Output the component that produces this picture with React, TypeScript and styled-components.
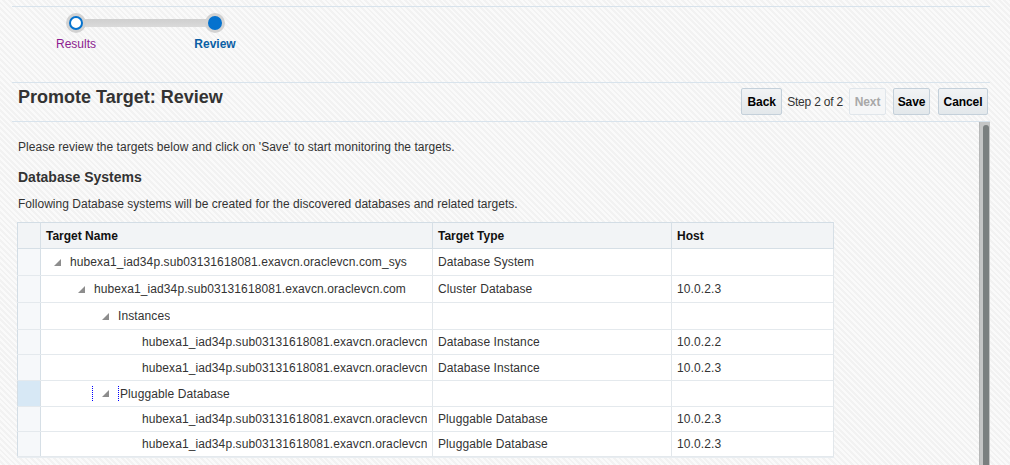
import React from "react";
import styled, { createGlobalStyle } from "styled-components";

const GlobalStyle = createGlobalStyle`
  html, body { margin: 0; padding: 0; }
  body {
    width: 1010px;
    height: 465px;
    overflow: hidden;
    background-color: #f6f6f6;
    background-image: repeating-linear-gradient(45deg, #fafafa 0 2px, #f2f2f2 2px 4px);
    font-family: "Liberation Sans", Arial, Helvetica, sans-serif;
    font-size: 12px;
    color: #333;
  }
`;

const Page = styled.div`
  padding: 6px 20px 0 12px;
`;

const Train = styled.div`
  border-top: 1px solid #d8e3ec;
  height: 75px;
  box-sizing: content-box;
`;

const TrainRow = styled.div`
  display: flex;
  align-items: flex-start;
  padding-top: 6px;
  margin-left: 34px;
`;

const Stop = styled.div`
  display: flex;
  flex-direction: column;
  align-items: center;
  width: 60px;
`;

const Ring = styled.div`
  position: relative;
  z-index: 1;
  width: 20px;
  height: 20px;
  border-radius: 50%;
  background: #d2d2d2;
  display: flex;
  align-items: center;
  justify-content: center;
`;

const Dot = styled.div<{ $current?: boolean }>`
  width: 14px;
  height: 14px;
  box-sizing: border-box;
  border-radius: 50%;
  border: 2px solid #0572ce;
  background: ${(p) => (p.$current ? "#0572ce" : "#ffffff")};
`;

const StopLabel = styled.div<{ $current?: boolean }>`
  margin-top: 4px;
  line-height: 14px;
  font-size: 12px;
  white-space: nowrap;
  color: ${(p) => (p.$current ? "#0b5fa5" : "#8c1c8f")};
  font-weight: ${(p) => (p.$current ? "bold" : "normal")};
`;

const Connector = styled.div`
  width: 123px;
  flex: none;
  height: 8px;
  margin: 6px -22px 0;
  background: linear-gradient(#cfcfcf, #dadada);
`;

const Header = styled.div`
  display: flex;
  justify-content: space-between;
  align-items: flex-start;
  height: 38px;
  border-top: 1px solid #d8e3ec;
  border-bottom: 1px solid #d8e3ec;
  padding: 0 2px 0 6px;
`;

const Title = styled.h1`
  margin: 3px 0 0;
  font-size: 18px;
  line-height: 22px;
  font-weight: bold;
  color: #333;
`;

const Toolbar = styled.div`
  display: flex;
  align-items: center;
  margin-top: 5px;
`;

const Button = styled.button<{ $gap?: number; $w: number }>`
  width: ${(p) => p.$w}px;
  height: 27px;
  box-sizing: border-box;
  margin-left: ${(p) => p.$gap ?? 0}px;
  padding: 0;
  text-align: center;
  border: 1px solid #c4d0da;
  border-radius: 2px;
  background: linear-gradient(#f1f3f5, #e3e8eb);
  font-family: "Liberation Sans", Arial, sans-serif;
  font-size: 12px;
  font-weight: bold;
  letter-spacing: -0.1px;
  color: #000;
  &:disabled {
    background: #f5f6f7;
    border-color: #e0e6eb;
    color: #a8a8a8;
  }
`;

const StepText = styled.span`
  margin: 0 0 0 5px;
  font-size: 12px;
  letter-spacing: -0.2px;
  color: #333;
  white-space: nowrap;
`;

const Body = styled.div`
  display: flex;
  height: 343px;
  overflow: hidden;
`;

const Main = styled.div`
  flex: 1;
  padding-left: 5px;
`;

const Intro = styled.p`
  margin: 18px 0 0 1px;
  line-height: 14px;
  letter-spacing: 0.03px;
`;

const SectionTitle = styled.h2`
  margin: 15px 0 0 1px;
  font-size: 14px;
  line-height: 17px;
  font-weight: bold;
  color: #333;
`;

const Note = styled.p`
  margin: 11px 0 0 1px;
  line-height: 14px;
  letter-spacing: 0.03px;
`;

const Table = styled.table`
  margin-top: 11px;
  border-collapse: collapse;
  table-layout: fixed;
  width: 817px;
  background: #fff;
  border: 1px solid #d3dde5;
  box-shadow: 0 1px 0 #e8edf1;
`;

const HeadCell = styled.th`
  height: 25px;
  padding: 0 5px;
  text-align: left;
  font-size: 12px;
  font-weight: bold;
  color: #111;
  background: #f2f4f6;
  border-right: 1px solid #d6dfe6;
  border-bottom: 1px solid #d6dfe6;
`;

const Row = styled.tr<{ $h: number }>`
  height: ${(p) => p.$h}px;
`;

const SelectCell = styled.td<{ $active?: boolean }>`
  padding: 0;
  background: ${(p) => (p.$active ? "#d7e8f5" : "#f6f8fa")};
  border-right: 1px solid #d6dfe6;
  border-bottom: 1px solid #e4e9ed;
`;

const Cell = styled.td`
  padding: 0 5px;
  white-space: nowrap;
  overflow: hidden;
  letter-spacing: 0.1px;
  color: #333;
  border-right: 1px solid #e2e7eb;
  border-bottom: 1px solid #e4e9ed;
`;

const TreeCell = styled.td<{ $level: number }>`
  padding: 0 5px 0 ${(p) => 13 + p.$level * 24}px;
  white-space: nowrap;
  overflow: hidden;
  letter-spacing: 0.1px;
  color: #333;
  border-right: 1px solid #e2e7eb;
  border-bottom: 1px solid #e4e9ed;
`;

const TreeLine = styled.div`
  display: flex;
  align-items: center;
`;

const Twisty = styled.svg`
  flex: none;
  width: 7px;
  height: 7px;
  margin-right: 9px;
`;

const LeafSpace = styled.span`
  flex: none;
  width: 16px;
`;

const FocusRing = styled.span`
  flex: none;
  display: flex;
  align-items: center;
  height: 15px;
  margin: 0 1px 0 -10px;
  padding: 0 0 0 9px;
  border-left: 1px dotted #0000ff;
  border-right: 1px dotted #0000ff;
`;

const Label = styled.span`
  min-width: 0;
  overflow: hidden;
  white-space: nowrap;
`;

const Track = styled.div`
  flex: none;
  width: 11px;
  box-sizing: border-box;
  padding: 3px 2px 0 3px;
  background: #c4c5c5;
  border-left: 1px solid #b7b8b8;
`;

const Thumb = styled.div`
  width: 6px;
  height: 400px;
  border-radius: 3px;
  background: #7a7f7f;
`;

const Triangle = () => (
  <Twisty viewBox="0 0 7 7">
    <polygon points="7,0 7,7 0,7" fill="#8d8d8d" />
  </Twisty>
);

type Node = {
  name: string;
  level: number;
  expandable?: boolean;
  focused?: boolean;
  type: string;
  host: string;
  h: number;
};

const rows: Node[] = [
  { name: "hubexa1_iad34p.sub03131618081.exavcn.oraclevcn.com_sys", level: 0, expandable: true, type: "Database System", host: "", h: 27 },
  { name: "hubexa1_iad34p.sub03131618081.exavcn.oraclevcn.com", level: 1, expandable: true, type: "Cluster Database", host: "10.0.2.3", h: 27 },
  { name: "Instances", level: 2, expandable: true, type: "", host: "", h: 27 },
  { name: "hubexa1_iad34p.sub03131618081.exavcn.oraclevcn.com_hubexa11", level: 3, type: "Database Instance", host: "10.0.2.2", h: 25 },
  { name: "hubexa1_iad34p.sub03131618081.exavcn.oraclevcn.com_hubexa12", level: 3, type: "Database Instance", host: "10.0.2.3", h: 26 },
  { name: "Pluggable Database", level: 2, expandable: true, focused: true, type: "", host: "", h: 26 },
  { name: "hubexa1_iad34p.sub03131618081.exavcn.oraclevcn.com_pdb1", level: 3, type: "Pluggable Database", host: "10.0.2.3", h: 25 },
  { name: "hubexa1_iad34p.sub03131618081.exavcn.oraclevcn.com_pdb2", level: 3, type: "Pluggable Database", host: "10.0.2.3", h: 25 },
];

export default function App() {
  return (
    <>
      <GlobalStyle />
      <Page>
        <Train>
          <TrainRow>
            <Stop>
              <Ring>
                <Dot />
              </Ring>
              <StopLabel>Results</StopLabel>
            </Stop>
            <Connector />
            <Stop>
              <Ring>
                <Dot $current />
              </Ring>
              <StopLabel $current>Review</StopLabel>
            </Stop>
          </TrainRow>
        </Train>
        <Header>
          <Title>Promote Target: Review</Title>
          <Toolbar>
            <Button $w={41}>Back</Button>
            <StepText>Step 2 of 2</StepText>
            <Button $w={37} $gap={6} disabled>
              Next
            </Button>
            <Button $w={37} $gap={7}>Save</Button>
            <Button $w={50} $gap={8}>Cancel</Button>
          </Toolbar>
        </Header>
        <Body>
          <Main>
            <Intro>Please review the targets below and click on 'Save' to start monitoring the targets.</Intro>
            <SectionTitle>Database Systems</SectionTitle>
            <Note>Following Database systems will be created for the discovered databases and related targets.</Note>
            <Table>
              <colgroup>
                <col style={{ width: 23 }} />
                <col style={{ width: 392 }} />
                <col style={{ width: 239 }} />
                <col style={{ width: 162 }} />
              </colgroup>
              <thead>
                <tr>
                  <HeadCell />
                  <HeadCell>Target Name</HeadCell>
                  <HeadCell>Target Type</HeadCell>
                  <HeadCell>Host</HeadCell>
                </tr>
              </thead>
              <tbody>
                {rows.map((r, i) => (
                  <Row key={i} $h={r.h}>
                    <SelectCell $active={r.focused} />
                    <TreeCell $level={r.level}>
                      <TreeLine>
                        {r.expandable ? (
                          r.focused ? (
                            <FocusRing>
                              <Triangle />
                            </FocusRing>
                          ) : (
                            <Triangle />
                          )
                        ) : (
                          <LeafSpace />
                        )}
                        <Label>{r.name}</Label>
                      </TreeLine>
                    </TreeCell>
                    <Cell>{r.type}</Cell>
                    <Cell>{r.host}</Cell>
                  </Row>
                ))}
              </tbody>
            </Table>
          </Main>
          <Track>
            <Thumb />
          </Track>
        </Body>
      </Page>
    </>
  );
}
